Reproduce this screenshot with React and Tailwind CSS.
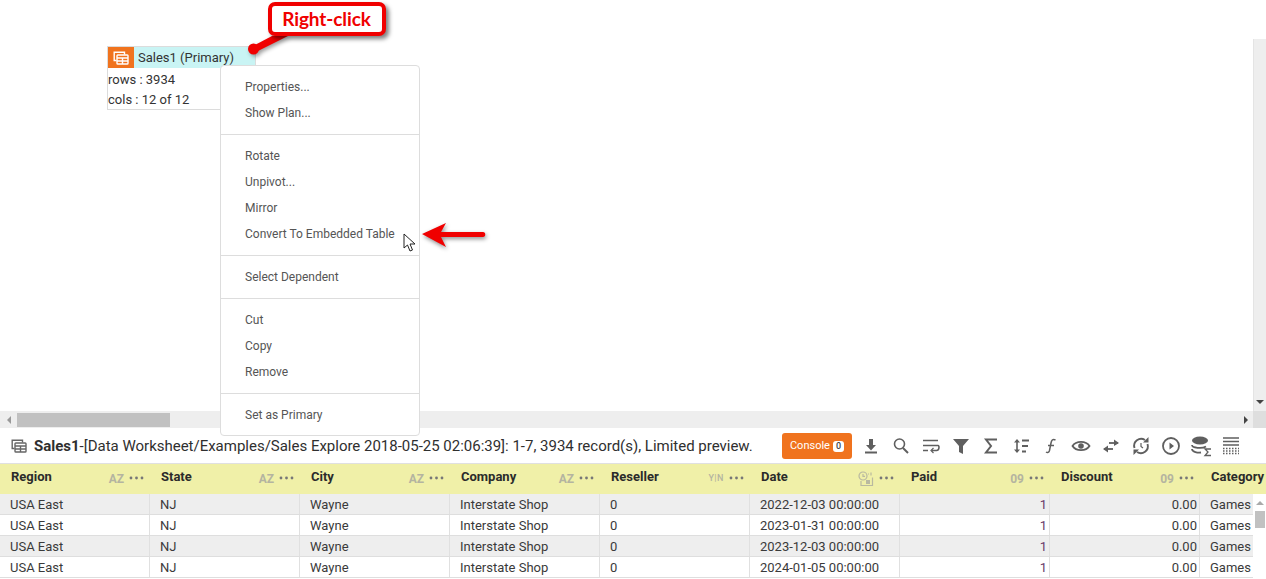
import React from "react";

const MENU = [
  ["Properties...", "Show Plan..."],
  ["Rotate", "Unpivot...", "Mirror", "Convert To Embedded Table"],
  ["Select Dependent"],
  ["Cut", "Copy", "Remove"],
  ["Set as Primary"],
];

const COLUMNS = [
  { name: "Region", type: "AZ" },
  { name: "State", type: "AZ" },
  { name: "City", type: "AZ" },
  { name: "Company", type: "AZ" },
  { name: "Reseller", type: "YN" },
  { name: "Date", type: "DATE" },
  { name: "Paid", type: "09" },
  { name: "Discount", type: "09" },
];

const DATES = ["2022-12-03 00:00:00", "2023-01-31 00:00:00", "2023-12-03 00:00:00", "2024-01-05 00:00:00"];

const TableIcon = ({ className }) => (
  <svg viewBox="0 0 16 16" className={className} fill="none" stroke="currentColor" strokeWidth="1.4">
    <path d="M3.5 10.5H1.2V2.2h10.3v2.3" />
    <rect x="4" y="5" width="11" height="9" rx="0.8" />
    <path d="M4 8h11M4 11h11M9.500 8v6" />
  </svg>
);

const Dots = () => (
  <svg width="15" height="4" viewBox="0 0 15 4" fill="#777" className="shrink-0">
    <circle cx="2" cy="2" r="1.4" />
    <circle cx="7.500" cy="2" r="1.4" />
    <circle cx="13" cy="2" r="1.4" />
  </svg>
);

const TypeIcon = ({ type }) => {
  if (type === "DATE") {
    return (
      <svg width="16" height="16" viewBox="0 0 16 16" fill="none" stroke="#b9b9a0" strokeWidth="1.2">
        <circle cx="5" cy="5" r="4" />
        <path d="M5 3v2.300h2" />
        <path d="M10 3h1M13 1.500v3M3 10v4.500h11.500V6.500" />
        <rect x="8" y="9" width="4" height="4" fill="#b9b9a0" stroke="none" />
      </svg>
    );
  }
  if (type === "YN") return <span className="text-[9px] font-medium tracking-[0.5px] text-[#b4b4a0]">Y|N</span>;
  return <span className="text-[12px] font-bold text-[#b4b4a0]">{type}</span>;
};

const ToolIcon = ({ children }) => (
  <svg width="20" height="20" viewBox="0 0 20 20" fill="none" stroke="#5f5f5f" strokeWidth="1.6" className="shrink-0 overflow-visible">
    {children}
  </svg>
);

const TOOLS = [
  <><path d="M10 3v8" strokeWidth="4" /><path d="M5 9h10L10 14.500z" fill="#5f5f5f" stroke="none" /><path d="M4 16.500h12" strokeWidth="2" /></>,
  <><circle cx="8.500" cy="8" r="5" /><path d="M12 12l5 5" strokeWidth="2" /></>,
  <><path d="M2 4.500h15M2 9.500h15c1.500 0 1.500 5-1.500 5H11M2 14.500h5" /><path d="M12.500 12l-2.500 2.500 2.500 2.500" strokeWidth="1.200" /></>,
  <path d="M2 3h16l-6 7v8l-4-2v-6z" fill="#5f5f5f" stroke="none" />,
  <path d="M15 4.500V3.500H5l5 6.500-5 6.500h10v-1" strokeWidth="2" />,
  <><path d="M6 4v12" /><path d="M3 6.500L6 3l3 3.500zM3 13.500L6 17l3-3.500z" fill="#5f5f5f" stroke="none" /><path d="M11 4.500h7M11 10h6M11 15.500h4" strokeWidth="2" /></>,
  <path d="M14.500 4c-3-1.500-4 .5-4.500 3l-1.500 7.500c-.5 2-2 2.500-3.500 1.500M7 9.500h6" strokeWidth="1.500" />,
  <><path d="M1.500 10C5 4.500 15 4.500 18.500 10 15 15.500 5 15.500 1.500 10z" strokeWidth="1.800" /><circle cx="10" cy="10" r="2.800" fill="#5f5f5f" stroke="none" /></>,
  <><path d="M8 7h9" strokeWidth="1.800" /><path d="M13 3.500L18 7l-5 3z" fill="#5f5f5f" stroke="none" /><path d="M3 13h9" strokeWidth="1.800" /><path d="M7 9.500L2 13l5 3.500z" fill="#5f5f5f" stroke="none" /></>,
  <><path d="M3.500 12a7 7 0 0 1 10.500-8M16.500 8a7 7 0 0 1-10.500 8" strokeWidth="1.900" /><path d="M12 6.500h5.500V1zM8 13.500H2.500V19z" fill="#5f5f5f" stroke="none" /><path d="M10 7v3.500l2 1.500" strokeWidth="1.200" /></>,
  <><circle cx="10" cy="10" r="8" strokeWidth="1.800" /><path d="M8.500 6.500L13 10l-4.500 3.500z" fill="#5f5f5f" stroke="none" /></>,
  <><ellipse cx="9" cy="4.500" rx="8" ry="4" fill="#5f5f5f" stroke="none" /><path d="M1 9c0 3 10 4 14 1.500M1 13c0 3 6 4 9 3.500" strokeWidth="1.800" /><path d="M20 13h-6l3 3-3 3.500h6" strokeWidth="1.300" /></>,
  <><path d="M2 2h16M2 5.500h16M2 9h16" strokeWidth="1.300" /><path d="M2 12.500h16M2 15h16M2 17.500h16" strokeWidth="1.300" strokeDasharray="1.500 1.500" /></>,
];

function HeaderCell({ col }) {
  return (
    <div className="w-[150px] shrink-0 flex items-center pl-[11px] pr-[6px] pb-[3px]">
      <span className="flex-1 pb-[2px] text-[13px] font-bold text-[#2b2b2b]">{col.name}</span>
      <span className="flex items-center justify-end gap-[5px]">
        <span className="pt-[2px] flex items-center"><TypeIcon type={col.type} /></span>
        <Dots />
      </span>
    </div>
  );
}

function Row({ date, shaded }) {
  const cells = ["USA East", "NJ", "Wayne", "Interstate Shop", "0", date];
  return (
    <div className={`flex h-[21px] border-b border-[#dedede] ${shaded ? "bg-[#eeeeee]" : "bg-white"}`}>
      {cells.map((text, i) => (
        <div key={i} className="w-[150px] shrink-0 pl-[10px] border-r border-[#e0e0e0] leading-[22px]">{text}</div>
      ))}
      <div className="w-[150px] shrink-0 pr-[2px] text-right text-[#6a3a6a] border-r border-[#e0e0e0] leading-[22px]">1</div>
      <div className="w-[150px] shrink-0 pr-[2px] text-right border-r border-[#e0e0e0] leading-[22px]">0.00</div>
      <div className="w-[54px] shrink-0 pl-[10px] leading-[22px]">Games</div>
    </div>
  );
}

export default function App() {
  return (
    <div className="h-[579px] w-[1266px] overflow-hidden bg-white text-[#333] flex flex-col text-[13px] font-['Roboto',sans-serif]">
      {/* canvas */}
      <div className="relative h-[411px] flex justify-end">
        <div className="mt-[39px] w-[13px] bg-[#eeeeee] border-l border-[#e4e4e4] flex flex-col justify-end items-center pb-[7px]">
          <div className="w-0 h-0 border-x-[4px] border-x-transparent border-t-[4px] border-t-[#444]" />
        </div>

        {/* worksheet node */}
        <div className="absolute left-[107px] top-[46px] w-[149px] h-[64px] border border-[#dcdcdc]">
          <div className="flex h-[21px] bg-[#c9f4f4]">
            <div className="w-[26px] bg-[#f0731e] flex items-center justify-center">
              <TableIcon className="w-[16px] h-[16px] text-white" />
            </div>
            <span className="pl-[4px] leading-[21px]">Sales1 (Primary)</span>
          </div>
          <div className="leading-[20px] pt-[2px]">rows : 3934</div>
          <div className="leading-[20px]">cols : 12 of 12</div>
        </div>

        {/* context menu */}
        <div className="absolute left-[220px] top-[65px] w-[200px] h-[371px] z-10 bg-white border border-[#dddddd] rounded-[4px] py-[8px] text-[12px] text-[#555]">
          {MENU.map((group, i) => (
            <div key={i} className={i > 0 ? "border-t border-[#dddddd] mt-[8px] pt-[8px]" : ""}>
              {group.map((item) => (
                <div key={item} className="h-[26px] leading-[26px] pl-[24px]">{item}</div>
              ))}
            </div>
          ))}
        </div>

        {/* callout annotation */}
        <svg className="absolute left-[245px] top-[30px] z-20 overflow-visible drop-shadow-[2px_2px_2px_rgba(0,0,0,0.4)]" width="60" height="26" viewBox="0 0 60 26">
          <path d="M8 16L27 6h16L11 22z" fill="#f00000" />
          <circle cx="8.500" cy="19" r="5.500" fill="#f00000" />
        </svg>
        <div className="absolute left-[268px] top-[2px] z-20 w-[118px] h-[34px] bg-white border-[4px] border-[#f00000] rounded-[7px] shadow-[3px_3px_4px_rgba(0,0,0,0.5)] flex items-center justify-center pr-[1px] text-[19px] tracking-[-0.1px] font-bold text-[#f00000] font-['Lato',sans-serif]">
          Right-click
        </div>

        {/* arrow annotation */}
        <svg className="absolute left-[420px] top-[221px] z-20 overflow-visible drop-shadow-[1px_2px_2px_rgba(0,0,0,0.45)]" width="70" height="28" viewBox="0 0 70 28">
          <path d="M2 13L26 2l-5 9h42c3 0 3 5 0 5H21l5 10z" fill="#f00000" />
        </svg>

        {/* mouse cursor */}
        <svg className="absolute left-[403px] top-[233px] z-20" width="14" height="20" viewBox="0 0 14 20">
          <path d="M1 1v14l3.500-3 2.500 6 2.500-1-2.500-6h5z" fill="#fff" stroke="#222" strokeWidth="1" />
        </svg>
      </div>

      {/* horizontal scrollbar */}
      <div className="h-[17px] bg-[#eeeeee] flex items-center shrink-0 relative">
        <div className="w-[17px] flex justify-center">
          <div className="w-0 h-0 border-y-[4px] border-y-transparent border-r-[4px] border-r-[#999]" />
        </div>
        <div className="w-[153px] h-[14px] bg-[#c1c1c1]" />
        <div className="flex-1 flex justify-end pr-[5px]">
          <div className="w-0 h-0 border-y-[4px] border-y-transparent border-l-[4px] border-l-[#444]" />
        </div>
        <div className="w-[13px] h-full bg-[#dedede]" />
      </div>

      {/* toolbar */}
      <div className="h-[35px] shrink-0 mt-[1px] flex items-center border-b border-[#e0e0e0] pl-[11px] bg-white">
        <TableIcon className="w-[16px] h-[16px] text-[#666] shrink-0" />
        <span className="ml-[7px] w-[748px] text-[15px] tracking-[-0.01px] whitespace-nowrap text-[#2f2f2f]"><b>Sales1</b>-[Data Worksheet/Examples/Sales Explore 2018-05-25 02:06:39]: 1-7, 3934 record(s), Limited preview.</span>
        <button className="w-[70px] h-[26px] bg-[#f0731e] rounded-[3px] text-white text-[11px] flex items-center justify-center gap-[3px] shrink-0">
          Console
          <span className="bg-white text-[#444] rounded-[3px] text-[9px] font-medium leading-[11px] px-[3px]">0</span>
        </button>
        <div className="ml-[9px] flex gap-[10px]">
          {TOOLS.map((icon, i) => <ToolIcon key={i}>{icon}</ToolIcon>)}
        </div>
      </div>

      {/* table header */}
      <div className="h-[30px] shrink-0 flex bg-[#f0f0a8] whitespace-nowrap">
        {COLUMNS.map((col) => <HeaderCell key={col.name} col={col} />)}
        <div className="pl-[11px] pb-[5px] flex items-center text-[13px] font-bold text-[#2b2b2b]">Category</div>
      </div>

      {/* table body */}
      <div className="flex flex-1 min-h-0 whitespace-nowrap text-[#3a3a3a]">
        <div className="w-[1253px] shrink-0 overflow-hidden">
          {DATES.map((d, i) => <Row key={d} date={d} shaded={i % 2 === 0} />)}
        </div>
        <div className="flex-1 bg-white flex flex-col items-center pt-[7px]">
          <div className="w-0 h-0 border-x-[4px] border-x-transparent border-b-[4px] border-b-[#aaa]" />
          <div className="mt-[6px] w-[10px] h-[17px] bg-[#c1c1c1]" />
        </div>
      </div>
    </div>
  );
}
